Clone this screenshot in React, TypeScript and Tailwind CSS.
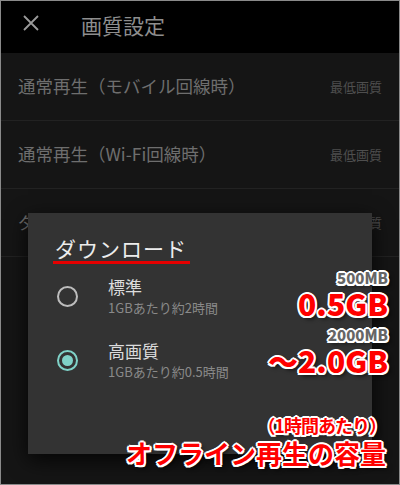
import React from 'react';

const outline =
  '[text-shadow:2px_0_0_#fff,-2px_0_0_#fff,0_2px_0_#fff,0_-2px_0_#fff,1.5px_1.5px_0_#fff,-1.5px_1.5px_0_#fff,1.5px_-1.5px_0_#fff,-1.5px_-1.5px_0_#fff,3px_3px_4px_rgba(0,0,0,0.7)]';

const rows = [
  { label: '通常再生（モバイル回線時）', value: '最低画質' },
  { label: '通常再生（Wi-Fi回線時）', value: '最低画質' },
  { label: 'ダウンロード', value: '最低画質' },
];

const options = [
  { name: '標準', note: '1GBあたり約2時間', checked: false },
  { name: '高画質', note: '1GBあたり約0.5時間', checked: true },
];

const App: React.FC = () => {
  return (
    <div className="relative w-[400px] h-[485px] overflow-hidden border border-[#8a8a8a] bg-[#151515] font-['Noto_Sans_CJK_JP','Noto_Sans',sans-serif]">
      {/* top bar */}
      <header className="h-[52px] bg-black flex items-start pt-[11px]">
        <svg viewBox="0 0 16 16" className="ml-[22px] mt-[3px] w-[16px] h-[16px] text-[#9a9a9a]" fill="none" stroke="currentColor" strokeWidth={1.8}>
          <path d="M1 1l14 14M15 1L1 15" />
        </svg>
        <h1 className="ml-[42px] text-[21px] leading-[26px] text-[#8e8e8e]">画質設定</h1>
      </header>

      {/* settings list */}
      <ul>
        {rows.map((r) => (
          <li key={r.label} className="h-[68px] border-b border-[#222] flex items-center justify-between pl-[17px] pr-[17px]">
            <span className="text-[17.5px] text-[#6e6e6e]">{r.label}</span>
            <span className="text-[13px] text-[#4e4e4e]">{r.value}</span>
          </li>
        ))}
      </ul>

      {/* dialog */}
      <div className="absolute left-[27px] top-[212px] w-[344px] h-[241px] bg-[#333333] shadow-[0_6px_20px_rgba(0,0,0,0.8)] pt-[22px] pl-[26px]">
        <div className="inline-block">
          <h2 className="text-[21px] leading-[26px] text-[#ececec] tracking-[1px] px-[1px]">ダウンロード</h2>
          <div className="h-[2.5px] w-[137px] -ml-[1px] bg-[#e60000]" />
        </div>
        <div className="mt-[12px] flex flex-col gap-[23px]">
          {options.map((o) => (
            <div key={o.name} className="flex items-center">
              <span
                className={`ml-[3px] w-[21px] h-[21px] rounded-full border-2 flex items-center justify-center ${
                  o.checked ? 'border-[#7fd2c8]' : 'border-[#bdbdbd]'
                }`}
              >
                {o.checked && <span className="w-[11px] h-[11px] rounded-full bg-[#7fd2c8]" />}
              </span>
              <div className="ml-[30px] flex flex-col">
                <span className="text-[17px] leading-[22px] text-[#dcdcdc]">{o.name}</span>
                <span className="text-[13px] leading-[19px] text-[#8a8a8a]">{o.note}</span>
              </div>
            </div>
          ))}
        </div>
      </div>

      {/* annotations */}
      <div className="absolute right-[11px] top-[269px] flex flex-col items-end font-black">
        <span className={`text-[15px] leading-[16px] text-[#666] ${outline}`}>500MB</span>
        <span className={`text-[30px] leading-[34px] text-[#ff0000] ${outline}`}>0.5GB</span>
        <span className={`mt-[7px] text-[15px] leading-[16px] text-[#666] ${outline}`}>2000MB</span>
        <span className={`text-[30px] leading-[34px] text-[#ff0000] ${outline}`}>〜2.0GB</span>
      </div>

      <div className="absolute right-[13px] top-[412px] flex flex-col items-end font-bold">
        <span className={`text-[18px] leading-[24px] tracking-[-1px] text-[#ff0000] ${outline}`}>（1時間あたり）</span>
        <span className={`text-[26px] leading-[32px] text-[#ff0000] ${outline}`}>オフライン再生の容量</span>
      </div>
    </div>
  );
};

export default App;
